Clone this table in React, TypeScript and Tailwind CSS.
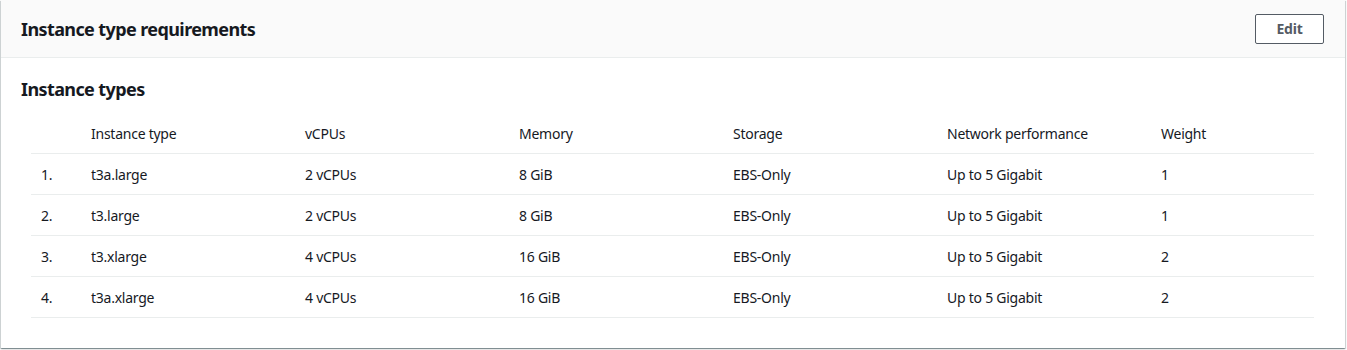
const rows = [
  { type: "t3a.large", vcpu: "2 vCPUs", mem: "8 GiB", storage: "EBS-Only", net: "Up to 5 Gigabit", weight: "1" },
  { type: "t3.large", vcpu: "2 vCPUs", mem: "8 GiB", storage: "EBS-Only", net: "Up to 5 Gigabit", weight: "1" },
  { type: "t3.xlarge", vcpu: "4 vCPUs", mem: "16 GiB", storage: "EBS-Only", net: "Up to 5 Gigabit", weight: "2" },
  { type: "t3a.xlarge", vcpu: "4 vCPUs", mem: "16 GiB", storage: "EBS-Only", net: "Up to 5 Gigabit", weight: "2" },
]

const cols = ["Instance type", "vCPUs", "Memory", "Storage", "Network performance", "Weight"]

export default function App() {
  return (
    <div
      className="h-[350px] bg-white text-[#16191f]"
      style={{ fontFamily: '"Noto Sans", "Open Sans", Arial, sans-serif' }}
    >
      <div className="ml-px w-[1344px] bg-white shadow-[0_1px_1px_0_rgba(0,28,36,0.3),1px_1px_1px_0_rgba(0,28,36,0.15),-1px_1px_1px_0_rgba(0,28,36,0.15)]">
        <div className="flex h-[58px] items-center justify-between border-b border-[#eaeded] bg-[#fafafa] pl-5 pr-[21px]">
          <h2 className="text-[18px] font-bold leading-[22px] tracking-[-0.6px]">Instance type requirements</h2>
          <button className="h-[30px] w-[69px] rounded-[2px] border border-[#545b64] bg-white text-[14px] font-bold tracking-[-0.2px] text-[#545b64]">
            Edit
          </button>
        </div>
        <div className="px-5 pb-[30px] pt-5">
          <h3 className="text-[18px] font-bold leading-[22px] tracking-[-0.6px]">Instance types</h3>
          <table className="mx-[10px] mt-3 w-[1283px] border-collapse text-[14px] leading-5 tracking-[-0.25px]">
            <thead>
              <tr className="h-[41px] border-b border-[#eaeded]">
                <th className="w-[50px]" />
                {cols.map((c, i) => (
                  <th
                    key={c}
                    className={`${i === 5 ? "" : "w-[214px]"} px-[10px] pt-[4px] text-left font-normal`}
                  >
                    {c}
                  </th>
                ))}
              </tr>
            </thead>
            <tbody>
              {rows.map((r, i) => (
                <tr key={r.type} className="h-[41px] border-b border-[#eaeded]">
                  <td className="px-[10px] pt-[2px]">{i + 1}.</td>
                  <td className="px-[10px] pt-[2px]">{r.type}</td>
                  <td className="px-[10px] pt-[2px]">{r.vcpu}</td>
                  <td className="px-[10px] pt-[2px]">{r.mem}</td>
                  <td className="px-[10px] pt-[2px]">{r.storage}</td>
                  <td className="px-[10px] pt-[2px]">{r.net}</td>
                  <td className="px-[10px] pt-[2px]">{r.weight}</td>
                </tr>
              ))}
            </tbody>
          </table>
        </div>
      </div>
    </div>
  )
}
